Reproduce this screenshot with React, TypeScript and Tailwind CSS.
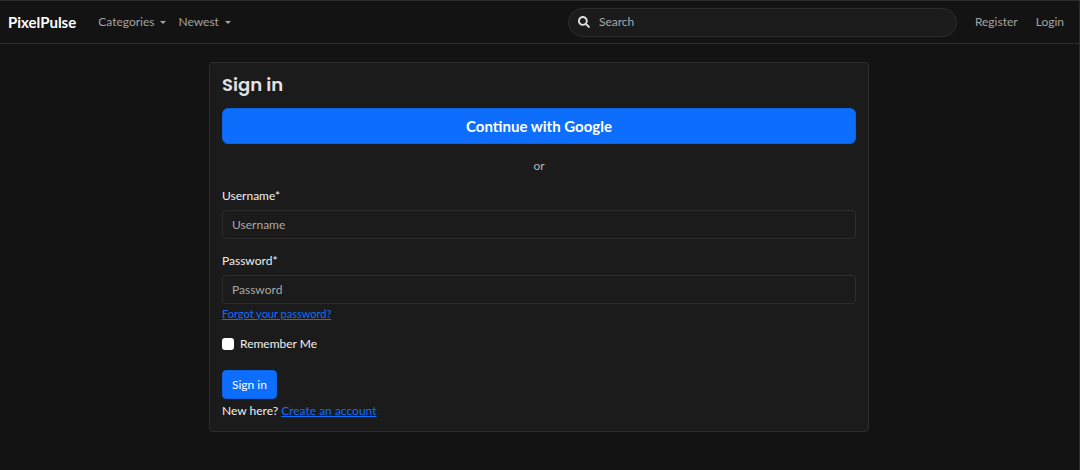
import React from "react";
import { FaSearch } from "react-icons/fa";

function Caret() {
  return (
    <svg viewBox="0 0 6 3" className="h-[3px] w-[6px]" aria-hidden="true">
      <path d="M0 0h6L3 3z" fill="currentColor" />
    </svg>
  );
}

function NavMenu({ label }: { label: string }) {
  return (
    <button type="button" className="flex items-center gap-1.5 text-[#a3a3a3]">
      {label}
      <Caret />
    </button>
  );
}

function Field({ id, label, type }: { id: string; label: string; type: string }) {
  return (
    <div className="flex flex-col gap-1">
      <label htmlFor={id} className="self-start">
        {label}*
      </label>
      <input
        id={id}
        type={type}
        placeholder={label}
        className="h-[29px] w-full rounded border border-[#2d2d2d] bg-[#1b1b1b] px-[9px] text-[#dee2e6] placeholder:text-[#a8a8a8] placeholder:opacity-100"
      />
    </div>
  );
}

export default function App() {
  return (
    <div className="min-h-screen border-t border-r border-[#2d2d2d] bg-[#131313] font-['Lato',sans-serif] text-[12px] leading-[20px] text-[#f0f0f0]">
      <header className="flex h-[43px] items-center border-b border-[#2d2d2d] pr-[15px] pl-2">
        <a href="#" className="text-[15px] font-bold text-white">
          PixelPulse
        </a>
        <nav className="ml-[22px] flex flex-1 items-center gap-3">
          <NavMenu label="Categories" />
          <NavMenu label="Newest" />
        </nav>
        <label className="flex h-[29px] w-2/5 max-w-[389px] items-center gap-[9px] rounded-full border border-[#2d2d2d] bg-[#1b1b1b] px-[9px]">
          <FaSearch className="size-3 shrink-0 text-[#dcdcdc]" aria-hidden="true" />
          <input
            type="search"
            placeholder="Search"
            aria-label="Search"
            className="min-w-0 flex-1 bg-transparent outline-none placeholder:text-[#a3a9ae] placeholder:opacity-100"
          />
        </label>
        <div className="ml-[18px] flex gap-[18px] text-[#a3a3a3]">
          <a href="#">Register</a>
          <a href="#">Login</a>
        </div>
      </header>

      <div className="pt-[18px] pr-px">
        <main className="mx-auto max-w-[660px] rounded border border-[#2d2d2d] bg-[#1b1b1b] px-3 pt-3 pb-2.5">
          <h1 className="font-['Poppins','Inter',sans-serif] text-[18px] leading-[20px] font-semibold text-[#e2e2e2]">
            Sign in
          </h1>
          <button
            type="button"
            className="mt-[13px] block h-9 w-full rounded-md border border-[#0c63e4] bg-[#0d6efd] text-[15px] font-bold text-white"
          >
            Continue with Google
          </button>
          <p className="mt-3 text-center text-[#b5b5b5]">or</p>
          <form className="mt-2.5" onSubmit={(e) => e.preventDefault()}>
            <div className="flex flex-col gap-3">
              <Field id="username" label="Username" type="text" />
              <Field id="password" label="Password" type="password" />
            </div>
            <a href="#" className="block w-fit text-[11px] text-[#0d6efd] underline">
              Forgot your password?
            </a>
            <label className="mt-2.5 flex w-fit items-center gap-1.5">
              <input
                type="checkbox"
                className="size-3 appearance-none rounded-[3px] bg-white checked:bg-[#0d6efd]"
              />
              Remember Me
            </label>
            <button
              type="submit"
              className="mt-4 block h-[29px] rounded border border-[#0c63e4] bg-[#0d6efd] px-[9px] text-white"
            >
              Sign in
            </button>
          </form>
          <p className="mt-0.5">
            New here?{" "}
            <a href="#" className="text-[#0d6efd] underline">
              Create an account
            </a>
          </p>
        </main>
      </div>
    </div>
  );
}
